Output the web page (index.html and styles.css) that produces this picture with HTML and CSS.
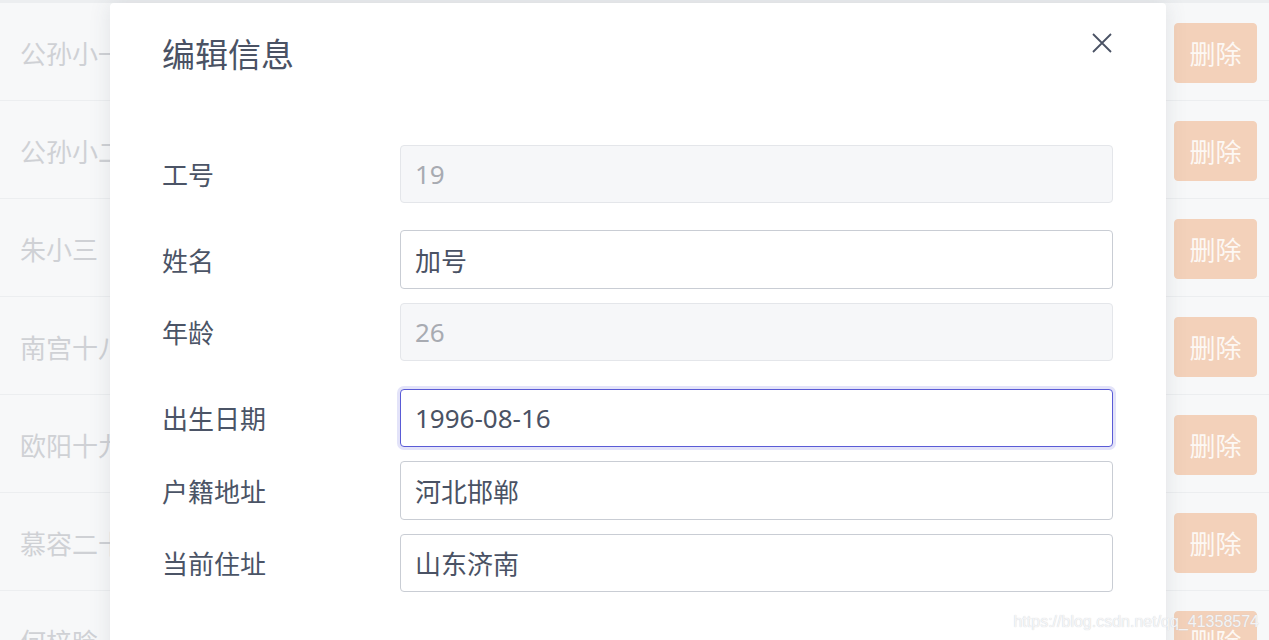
FILE: index.html
```html
<!DOCTYPE html>
<html>
<head>
	<meta charset="utf-8">
	<meta name="viewport" content="width=device-width, initial-scale=1">
	<title>编辑信息</title>
	<link rel="stylesheet" href="styles.css">
</head>
<body>
	<div class="topbar"></div>
	<div class="table">
		<div class="row"><span class="name">公孙小一</span><span class="ops"><button class="btn edit">编辑</button><button class="btn del">删除</button></span></div>
		<div class="row"><span class="name">公孙小二</span><span class="ops"><button class="btn edit">编辑</button><button class="btn del">删除</button></span></div>
		<div class="row"><span class="name">朱小三</span><span class="ops"><button class="btn edit">编辑</button><button class="btn del">删除</button></span></div>
		<div class="row"><span class="name">南宫十八</span><span class="ops"><button class="btn edit">编辑</button><button class="btn del">删除</button></span></div>
		<div class="row"><span class="name">欧阳十九</span><span class="ops"><button class="btn edit">编辑</button><button class="btn del">删除</button></span></div>
		<div class="row"><span class="name">慕容二十</span><span class="ops"><button class="btn edit">编辑</button><button class="btn del">删除</button></span></div>
		<div class="row"><span class="name">何梓晗</span><span class="ops"><button class="btn edit">编辑</button><button class="btn del">删除</button></span></div>
	</div>

	<div class="modal">
		<div class="modal-head">
			<span class="modal-title">编辑信息</span>
			<svg class="close" width="20" height="20" viewBox="0 0 20 20">
				<path d="M1 1 L19 19 M19 1 L1 19" stroke="#4a5264" stroke-width="1.8" fill="none"/>
			</svg>
		</div>
		<div class="form">
			<div class="field spaced">
				<label class="label">工号</label>
				<input class="input" type="text" value="19" disabled>
			</div>
			<div class="field">
				<label class="label">姓名</label>
				<input class="input tall" type="text" value="加号">
			</div>
			<div class="field spaced wide">
				<label class="label">年龄</label>
				<input class="input" type="text" value="26" disabled>
			</div>
			<div class="field">
				<label class="label">出生日期</label>
				<input class="input focus" type="text" value="1996-08-16">
			</div>
			<div class="field">
				<label class="label">户籍地址</label>
				<input class="input tall" type="text" value="河北邯郸">
			</div>
			<div class="field">
				<label class="label">当前住址</label>
				<input class="input" type="text" value="山东济南">
			</div>
		</div>
	</div>

	<div class="watermark">https://blog.csdn.net/qq_41358574</div>
</body>
</html>
```

FILE: styles.css
```css
body{
	margin: 0;
	background-color: #f7f8f9;
	font-family: "Noto Sans", "Noto Sans CJK SC", sans-serif;
	overflow: hidden;
	height: 640px;
}
.topbar{
	height: 3px;
	background-color: #eceef0;
}
.row{
	height: 98px;
	box-sizing: border-box;
	border-bottom: 1px solid #eceef0;
	display: flex;
	align-items: center;
	justify-content: space-between;
	padding: 2px 12px 0 20px;
}
.name{
	font-size: 26px;
	color: #cfd1d5;
}
.ops{
	display: flex;
	gap: 8px;
}
.btn{
	width: 83px;
	height: 60px;
	border-radius: 4px;
	font-family: "Noto Sans", "Noto Sans CJK SC", sans-serif;
	font-size: 26px;
	color: #fdf8f4;
	padding: 0;
}
.edit{
	background-color: #eef7f0;
	border: 1px solid #b9e2c4;
}
.del{
	background-color: #f3d1ba;
	border: 1px solid #f3d1ba;
}

.modal{
	position: absolute;
	left: 110px;
	top: 3px;
	width: 1056px;
	height: 700px;
	background-color: #ffffff;
	border-radius: 4px;
	box-shadow: 0 0 22px rgba(60, 66, 80, 0.12);
}
.modal-head{
	display: flex;
	justify-content: space-between;
	align-items: flex-start;
	padding: 30px 53px 0 52px;
}
.modal-title{
	font-size: 33px;
	line-height: 44px;
	color: #4a5264;
}
.close{
	margin-top: 0;
	margin-right: 1px;
}
.form{
	padding: 68px 53px 0 52px;
}
.field{
	display: flex;
	align-items: center;
	margin-bottom: 14px;
}
.field.spaced{
	margin-bottom: 27px;
}
.field.wide{
	margin-bottom: 28px;
}
.label{
	width: 238px;
	flex-shrink: 0;
	font-size: 26px;
	color: #4b5466;
}
.input{
	flex: 1;
	height: 58px;
	box-sizing: border-box;
	border: 1px solid #c9cdd4;
	border-radius: 4px;
	padding: 0 14px;
	font-family: "Noto Sans", "Noto Sans CJK SC", sans-serif;
	font-size: 26px;
	color: #4a5264;
	background-color: #ffffff;
	outline: none;
}
.input.tall{
	height: 59px;
}
.input:disabled{
	background-color: #f6f7f9;
	border-color: #e4e6ea;
	color: #a8abb2;
}
.input.focus{
	border-color: #5a5bd6;
	box-shadow: 0 0 0 3px #e3e3f9;
}
.watermark{
	position: absolute;
	right: 10px;
	bottom: 9px;
	font-family: "Liberation Sans", Arial, sans-serif;
	font-size: 16px;
	color: rgba(250, 250, 252, 0.9);
	text-shadow: 0 0 1px #c4c7cc;
}
```
